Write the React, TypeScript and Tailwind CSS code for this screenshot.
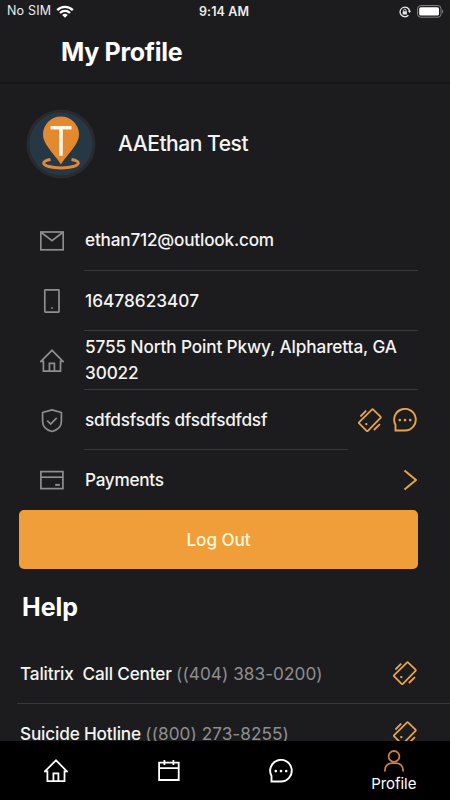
import type { ReactNode } from 'react'

function Icon({ children, className = '', width = 1.7 }: { children: ReactNode; className?: string; width?: number }) {
  return (
    <svg
      viewBox="0 0 24 24"
      className={`w-6 h-6 shrink-0 ${className}`}
      fill="none"
      stroke="currentColor"
      strokeWidth={width}
    >
      {children}
    </svg>
  )
}

const MailIcon = () => (
  <Icon className="text-[#8e8e90]">
    <rect x="0.8" y="3" width="22.4" height="17.8" />
    <path d="M1 3.3l11 8.4 11-8.4" />
  </Icon>
)

const PhoneIcon = () => (
  <Icon className="text-[#8e8e90]">
    <rect x="4.8" y="0.9" width="14.2" height="22.2" rx="0.6" />
    <circle cx="12" cy="19" r="0.9" fill="currentColor" stroke="none" />
  </Icon>
)

const HouseIcon = ({ className = 'text-[#8e8e90]', width = 1.7 }: { className?: string; width?: number }) => (
  <Icon className={className} width={width}>
    <path d="M3.4 12.4H0.9L12 1.3l11 11.1h-2.5v9.8H3.4z" />
    <path d="M9.4 22v-7.6h5V22" />
  </Icon>
)

const ShieldIcon = () => (
  <Icon className="text-[#8e8e90]">
    <path d="M12 0.9l9.4 2.6v8.8c0 5.6-4.5 9-9.4 10.2-4.9-1.2-9.4-4.6-9.4-10.2V3.5z" strokeLinejoin="round" />
    <path d="M7.2 11.6l3.5 3.4 6-6.2" />
  </Icon>
)

const CardIcon = () => (
  <Icon className="text-[#8e8e90]">
    <rect x="0.9" y="2.6" width="22" height="17" />
    <path d="M1 8.2h22" />
    <path d="M15.2 15.9h4.6" strokeWidth="2" />
  </Icon>
)

const CallIcon = () => (
  <Icon className="text-[#e9a24c]" width={1.8}>
    <path d="M1.2 14.1L13.9 1.6c.4-.4.9-.4 1.3 0l7.3 7c.4.4.4.9 0 1.3L9.9 22.8c-.4.4-.9.4-1.3 0l-7.4-7.4c-.4-.4-.4-.9 0-1.3z" />
    <path d="M2.4 8.5l5.8-5.8M15.9 22l6.1-5.9" />
    <circle cx="8.3" cy="16.1" r="1.2" fill="currentColor" stroke="none" />
  </Icon>
)

const ChatIcon = ({ className }: { className: string }) => (
  <Icon className={className} width={1.9}>
    <path d="M2.5 22.5v-5.6A10.8 10.8 0 1 1 12 22.5z" />
    <g fill="currentColor" stroke="none">
      <circle cx="6.8" cy="12.1" r="1.3" />
      <circle cx="12" cy="12.1" r="1.3" />
      <circle cx="17.2" cy="12.1" r="1.3" />
    </g>
  </Icon>
)

const CalendarIcon = () => (
  <Icon width={1.8}>
    <path d="M2.1 3.6h19.6v17.4H2.100zM2.1 9.200h19.600M7.400 1.100v5M16.400 1.100v5" />
  </Icon>
)

const PersonIcon = () => (
  <Icon className="text-[#c97f3f]" width={1.8}>
    <circle cx="12" cy="7.4" r="5.4" />
    <path d="M2.9 22.6v-1.2c0-4.3 3-7.3 7-7.3h4.2c4 0 7 3 7 7.3v1.2" />
  </Icon>
)

function StatusBar() {
  return (
    <div className="h-[23px] shrink-0 grid grid-cols-3 items-center pl-[7px] pr-1.5 text-[12.5px] leading-none text-[#ececec]">
      <div className="flex items-center gap-[5px]">
        <span className="tracking-[0.2px]">No SIM</span>
        <svg viewBox="0 0 18 13" className="w-[18px] h-[13px]" fill="none" stroke="#fff" strokeWidth="2.3">
          <path d="M1.2 5.1a11 11 0 0 1 15.6 0M4 8a7 7 0 0 1 10 0" />
          <path d="M6.2 10a4 4 0 0 1 5.6 0L9 12.8z" fill="#fff" stroke="none" />
        </svg>
      </div>
      <div className="text-center font-semibold pr-[3px] pt-px tracking-[0.1px]">9:14 AM</div>
      <div className="flex items-center justify-end gap-1.5">
        <svg viewBox="0 0 12 12" className="w-3 h-3" fill="none" stroke="#e8e8e8" strokeWidth="1.3">
          <path d="M9.4 9.2A4.800 4.800 0 1 1 10.600 5" />
          <path d="M8.900 4.800h3.100L10.600 7.100z" fill="#e8e8e8" stroke="none" />
          <rect x="3.700" y="5.300" width="4.200" height="3.200" fill="#e8e8e8" stroke="none" />
          <path d="M4.600 5.600V4.400a1.200 1.200 0 0 1 2.400 0v1.200" strokeWidth="0.900" />
        </svg>
        <svg viewBox="0 0 27 13" className="w-[27px] h-[13px]">
          <rect x="0.6" y="0.6" width="23.4" height="11.6" rx="3" fill="none" stroke="#858587" />
          <rect x="2.2" y="2.2" width="19.8" height="8.4" rx="1.6" fill="#fff" />
          <path d="M25.2 4.4c1.4.6 1.4 3.4 0 4z" fill="#858587" />
        </svg>
      </div>
    </div>
  )
}

function Avatar() {
  return (
    <svg viewBox="0 0 70 70" className="w-[70px] h-[70px]">
      <circle cx="35" cy="35" r="34.5" fill="#29292f" />
      <circle cx="35" cy="35" r="31.5" fill="#273845" />
      <path d="M24.5 50.4c-4 .7-6.8 2-6.8 3.7 0 2.800 7.700 4.800 17.300 4.800s17.300-2 17.300-4.800c0-1.700-2.800-3-6.800-3.700" fill="none" stroke="#e0893b" strokeWidth="3" />
      <path d="M35 55.5C30.5 47 17 36 17 25.5a17.8 17.8 0 0 1 36 0C53 36 39.5 47 35 55.5z" fill="#e58930" />
      <path d="M24.5 18.8h21M35 18.8v28" fill="none" stroke="#fff6e8" strokeWidth="3.6" />
    </svg>
  )
}

function Row({ icon, children, actions, last }: { icon: ReactNode; children: ReactNode; actions?: ReactNode; last?: boolean }) {
  return (
    <div className="flex h-[59.8px] pl-10 pr-8">
      <div className="flex items-center w-11 pt-px">{icon}</div>
      <div className={`flex-1 flex items-center text-[17.2px] leading-[26px] font-medium pl-px ${last ? '' : 'border-b border-[#38383a]'}`}>
        {children}
      </div>
      {actions && <div className="flex items-center gap-[11px] pl-[10px] pr-px">{actions}</div>}
    </div>
  )
}

function HelpRow({ name, phone }: { name: string; phone: string }) {
  return (
    <div className="h-[60px] shrink-0 ml-[17px] pl-[3px] pr-[33px] flex items-center justify-between border-b border-[#38383a]">
      <div className="text-[17.2px] font-medium whitespace-pre">
        <span className="tracking-[-0.17px]">{name} </span>
        <span className="text-[#8e8e92] font-normal tracking-[0.05px]">({phone})</span>
      </div>
      <CallIcon />
    </div>
  )
}

export default function App() {
  return (
    <div className="w-[450px] h-[800px] flex flex-col overflow-hidden bg-[#1c1c1e] text-[#f4f4f4] font-['Inter',sans-serif]">
      <StatusBar />
      <header className="h-[61px] shrink-0 pl-[61px] border-b-2 border-[#161618]">
        <h1 className="pt-[11px] text-[25px] leading-9 font-bold text-white tracking-[-0.3px]">My Profile</h1>
      </header>

      <main className="flex-1 min-h-0 overflow-hidden">
        <div className="flex items-center gap-[22px] pl-[26px] pt-[24px] h-[95px]">
          <Avatar />
          <span className="text-[21px] font-medium tracking-[-0.45px]">AAEthan Test</span>
        </div>

        <div className="mt-8">
          <Row icon={<MailIcon />}><span className="tracking-[-0.2px]">ethan712@outlook.com</span></Row>
          <Row icon={<PhoneIcon />}><span className="tracking-[0.03px] pt-px">16478623407</span></Row>
          <Row icon={<HouseIcon />}><span className="tracking-[-0.12px]">5755 North Point Pkwy, Alpharetta, GA 30022</span></Row>
          <Row icon={<ShieldIcon />} actions={<><CallIcon /><ChatIcon className="text-[#e9a24c]" /></>}>
            <span className="tracking-[-0.22px]">sdfdsfsdfs dfsdfsdfdsf</span>
          </Row>
          <Row
            last
            icon={<CardIcon />}
            actions={
              <svg viewBox="0 0 14 22" className="w-3.5 h-[22px]" fill="none" stroke="#e9a24c" strokeWidth="2">
                <path d="M1.500 1.500l11.500 9.500L1.500 20.500" />
              </svg>
            }
          >
            <span className="tracking-[-0.3px]">Payments</span>
          </Row>
        </div>

        <button className="block ml-[19px] w-[399px] h-[59px] rounded-[5px] bg-[#f09e39] text-[17.2px] font-medium text-[#fff8d8] tracking-[-0.1px]">
          Log Out
        </button>

        <h2 className="pl-[22px] mt-[20px] h-[36px] text-[25px] leading-9 font-bold text-white">Help</h2>
        <div className="mt-[19px]">
          <HelpRow name="Talitrix  Call Center" phone="(404) 383-0200" />
          <HelpRow name="Suicide Hotline" phone="(800) 273-8255" />
        </div>
      </main>

      <nav className="h-[59px] shrink-0 bg-black grid grid-cols-4 text-white">
        <div className="flex items-center justify-center">
          <HouseIcon className="text-white" width={1.8} />
        </div>
        <div className="flex items-center justify-center">
          <CalendarIcon />
        </div>
        <div className="flex items-center justify-center">
          <ChatIcon className="text-white" />
        </div>
        <div className="flex flex-col items-center pt-2">
          <PersonIcon />
          <span className="text-[15px] leading-[21px] tracking-[-0.05px]">Profile</span>
        </div>
      </nav>
    </div>
  )
}
